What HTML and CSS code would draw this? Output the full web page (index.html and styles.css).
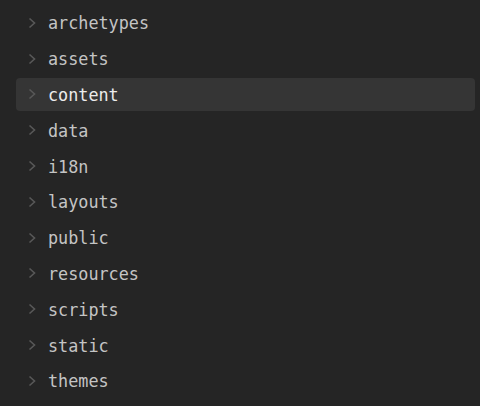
FILE: index.html
```html
<!DOCTYPE html>
<html>
<head>
<meta charset="utf-8">
<link rel="stylesheet" href="styles.css">
</head>
<body>
<ul class="tree">
  <li class="row"><span class="item"><svg class="chev" viewBox="0 0 8 12"><path d="M1.5 1.5 L6.5 6 L1.5 10.5"/></svg><span class="name">archetypes</span></span></li>
  <li class="row"><span class="item"><svg class="chev" viewBox="0 0 8 12"><path d="M1.5 1.5 L6.5 6 L1.5 10.5"/></svg><span class="name">assets</span></span></li>
  <li class="row active"><span class="item"><svg class="chev" viewBox="0 0 8 12"><path d="M1.5 1.5 L6.5 6 L1.5 10.5"/></svg><span class="name">content</span></span></li>
  <li class="row"><span class="item"><svg class="chev" viewBox="0 0 8 12"><path d="M1.5 1.5 L6.5 6 L1.5 10.5"/></svg><span class="name">data</span></span></li>
  <li class="row"><span class="item"><svg class="chev" viewBox="0 0 8 12"><path d="M1.5 1.5 L6.5 6 L1.5 10.5"/></svg><span class="name">i18n</span></span></li>
  <li class="row"><span class="item"><svg class="chev" viewBox="0 0 8 12"><path d="M1.5 1.5 L6.5 6 L1.5 10.5"/></svg><span class="name">layouts</span></span></li>
  <li class="row"><span class="item"><svg class="chev" viewBox="0 0 8 12"><path d="M1.5 1.5 L6.5 6 L1.5 10.5"/></svg><span class="name">public</span></span></li>
  <li class="row"><span class="item"><svg class="chev" viewBox="0 0 8 12"><path d="M1.5 1.5 L6.5 6 L1.5 10.5"/></svg><span class="name">resources</span></span></li>
  <li class="row"><span class="item"><svg class="chev" viewBox="0 0 8 12"><path d="M1.5 1.5 L6.5 6 L1.5 10.5"/></svg><span class="name">scripts</span></span></li>
  <li class="row"><span class="item"><svg class="chev" viewBox="0 0 8 12"><path d="M1.5 1.5 L6.5 6 L1.5 10.5"/></svg><span class="name">static</span></span></li>
  <li class="row"><span class="item"><svg class="chev" viewBox="0 0 8 12"><path d="M1.5 1.5 L6.5 6 L1.5 10.5"/></svg><span class="name">themes</span></span></li>
</ul>
</body>
</html>
```
FILE: styles.css
```css
html, body {
  margin: 0;
  padding: 0;
  background: #252525;
  height: 100%;
  overflow: hidden;
}
.tree {
  list-style: none;
  margin: 0;
  padding: 5px 5px 0 16px;
  display: flex;
  flex-direction: column;
}
.row {
  height: 35.8px;
  display: flex;
  align-items: center;
}
.item {
  flex: 1;
  height: 33px;
  display: flex;
  align-items: center;
  border-radius: 4px;
  padding-left: 12px;
}
.active .item {
  background: #353535;
}
.chev {
  width: 8px;
  height: 12px;
  fill: none;
  stroke: #585858;
  stroke-width: 1.6;
  margin-right: 12px;
}
.name {
  font-family: "DejaVu Sans Mono", "Liberation Mono", monospace;
  font-size: 16.8px;
  color: #c4c4c4;
  line-height: 1;
  padding-top: 2px;
}
.active .name {
  color: #ececec;
}
```
